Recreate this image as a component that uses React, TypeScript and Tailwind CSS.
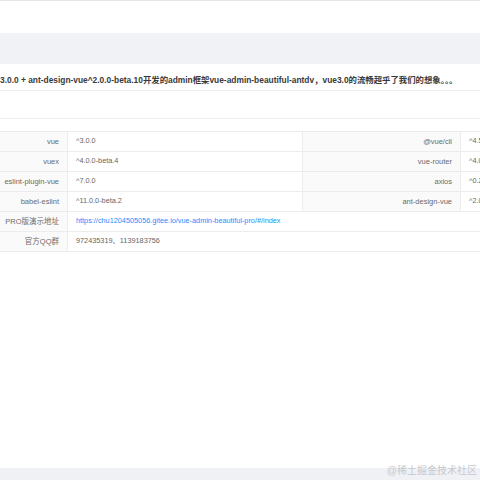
import React from 'react';

const font = { fontFamily: '"Liberation Sans", "Noto Sans CJK SC", sans-serif' };

const pairs = [
  ['vue', '^3.0.0', '@vue/cli', '^4.5.0'],
  ['vuex', '^4.0.0-beta.4', 'vue-router', '^4.0.0-beta.13'],
  ['eslint-plugin-vue', '^7.0.0', 'axios', '^0.20.0'],
  ['babel-eslint', '^11.0.0-beta.2', 'ant-design-vue', '^2.0.0-beta.10'],
];

const Label = ({ children }: { children: React.ReactNode }) => (
  <div className="h-5 flex items-center justify-end pr-2 bg-[#fafafa] border-b border-r border-[#ececec] text-[7.5px] text-[#6b6b6b] whitespace-nowrap">
    {children}
  </div>
);

const Value = ({ children, wide }: { children: React.ReactNode; wide?: boolean }) => (
  <div className={`h-5 flex items-center pl-2 border-b border-r border-[#ececec] text-[7.3px] text-[#666] whitespace-nowrap ${wide ? 'col-span-3' : ''}`}>
    {children}
  </div>
);

export default function App() {
  return (
    <div className="relative w-[480px] h-[480px] overflow-hidden bg-white flex flex-col" style={font}>
      <div className="h-[33px] border-t border-[#e6e6e6] shrink-0" />
      <div className="h-[31px] bg-[#f0f2f5] shrink-0" />
      <div className="h-[27px] flex items-center pt-[6px] border-b border-[#f0f0f0] shrink-0">
        <span className="text-[8.4px] font-semibold text-[#3a3a3a] whitespace-nowrap">
          3.0.0 + ant-design-vue^2.0.0-beta.10开发的admin框架vue-admin-beautiful-antdv，vue3.0的流畅超乎了我们的想象。。。
        </span>
      </div>
      <div className="h-[28px] border-b border-[#f0f0f0] shrink-0" />
      <div className="h-[12px] shrink-0" />
      <div className="grid grid-cols-[68px_235px_158px_240px] w-[701px] border-t border-[#ececec] shrink-0">
        {pairs.map((p) => (
          <React.Fragment key={p[0]}>
            <Label>{p[0]}</Label>
            <Value>{p[1]}</Value>
            <Label>{p[2]}</Label>
            <Value>{p[3]}</Value>
          </React.Fragment>
        ))}
        <Label>PRO版演示地址</Label>
        <Value wide>
          <span className="text-[#1890ff]">https://chu1204505056.gitee.io/vue-admin-beautiful-pro/#/index</span>
        </Value>
        <Label>官方QQ群</Label>
        <Value wide>972435319、1139183756</Value>
      </div>
      <div className="flex-1" />
      <div className="h-[12px] bg-[#f0f1f5] shrink-0" />
      <div className="absolute right-[3px] bottom-[2px] text-[10px] text-[#c8c8cc]">
        @稀土掘金技术社区
      </div>
    </div>
  );
}
